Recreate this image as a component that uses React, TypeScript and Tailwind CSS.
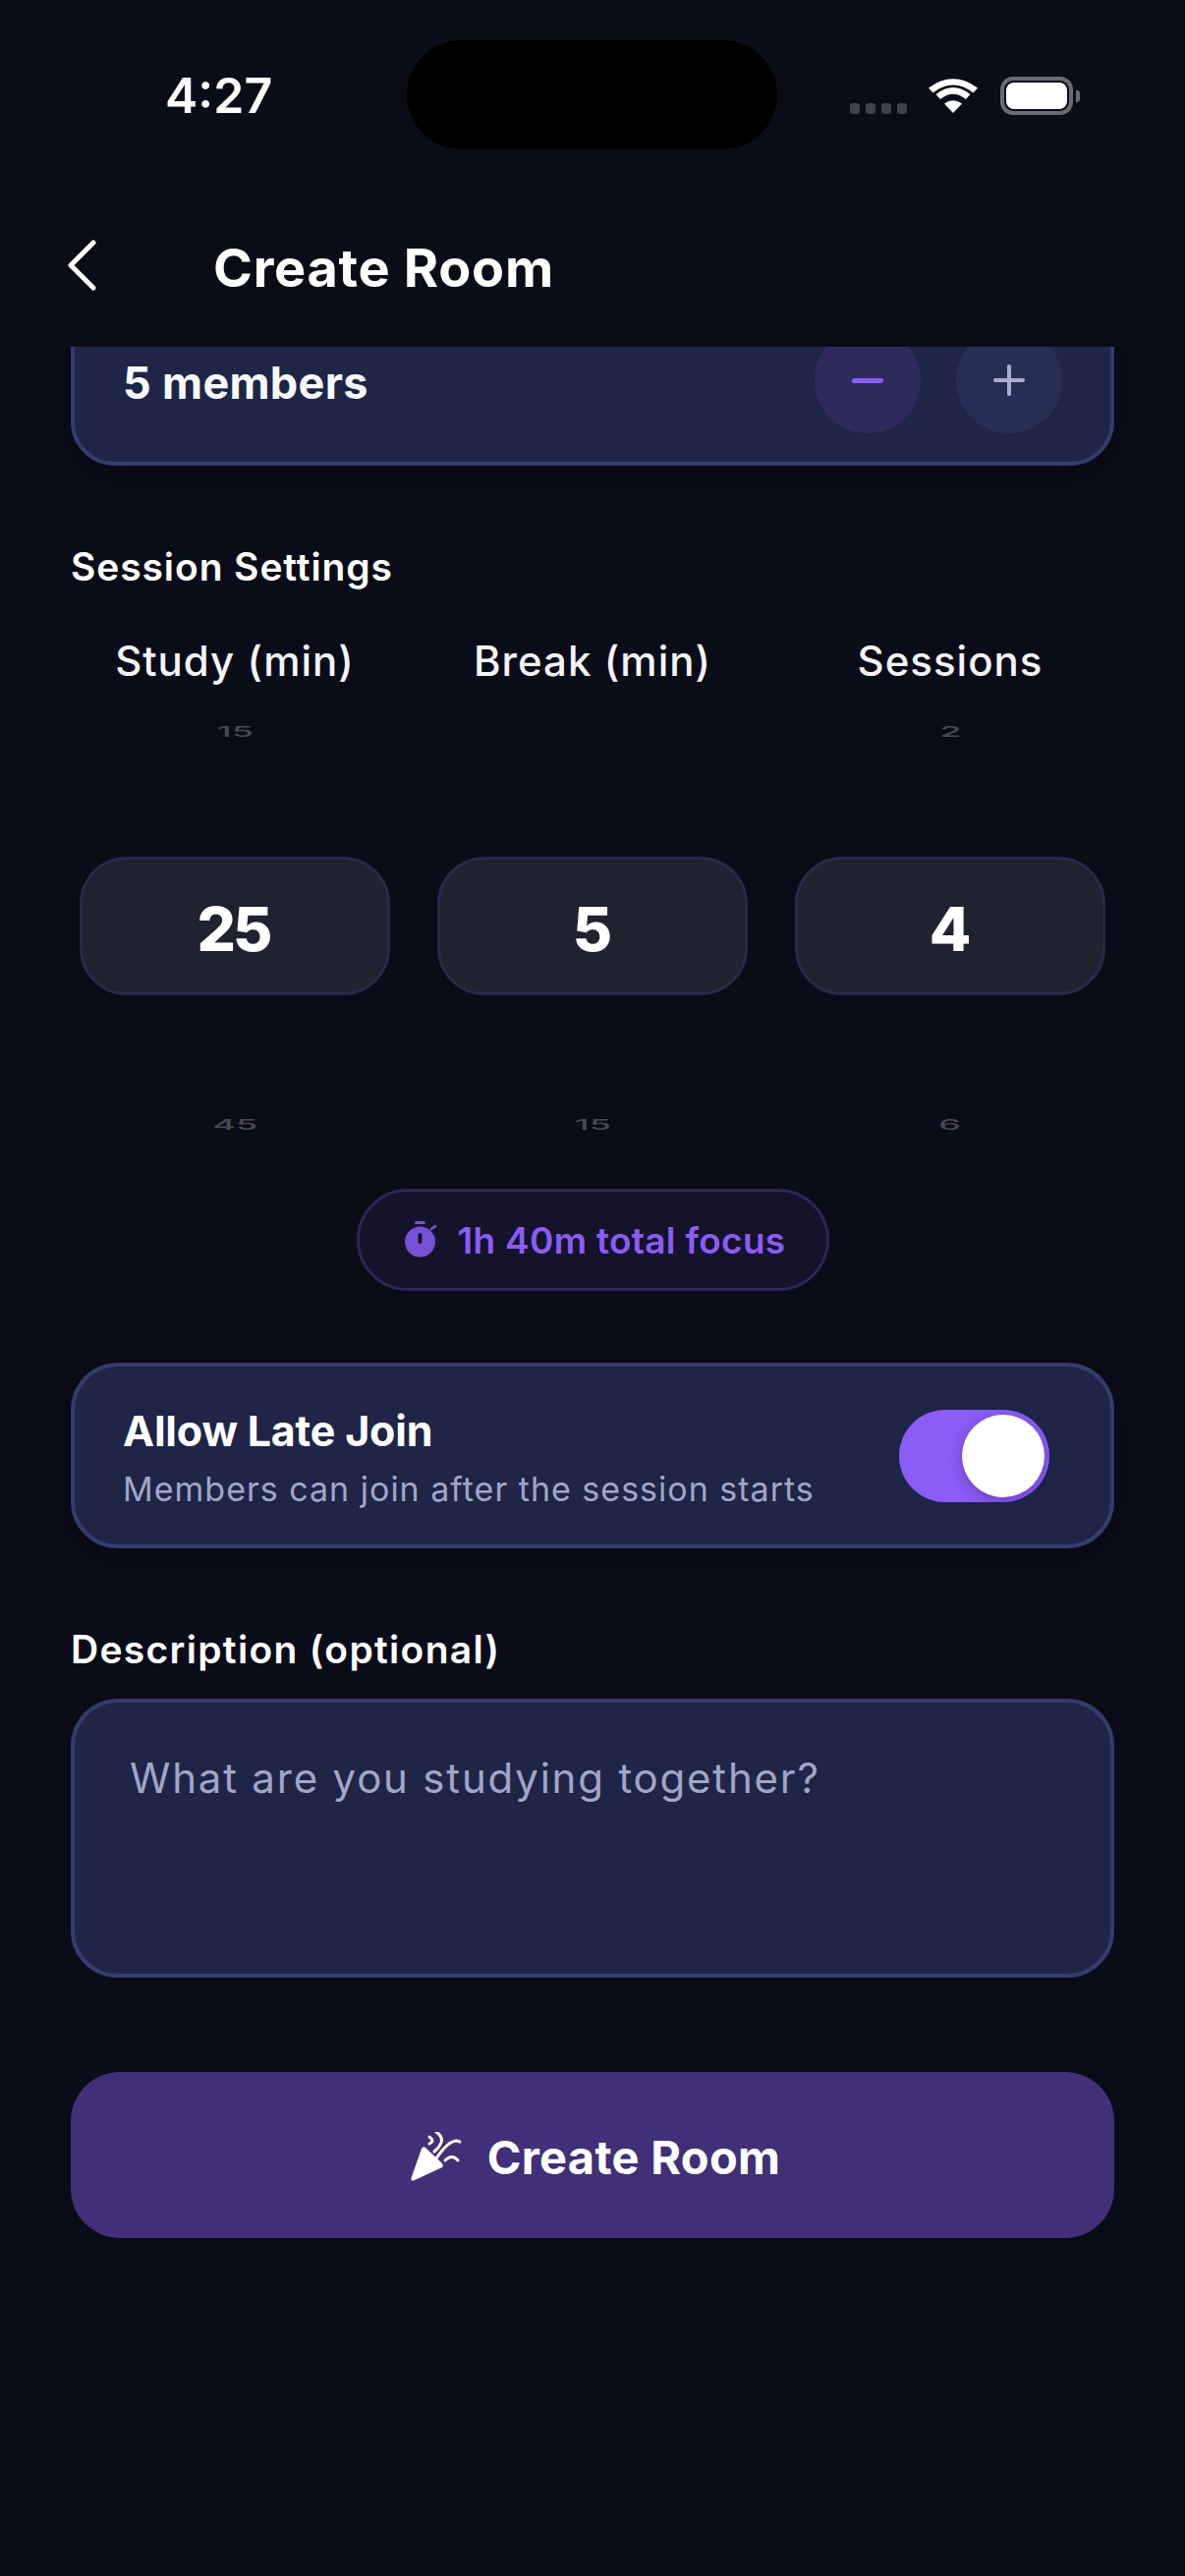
const font = { fontFamily: '"Inter", "Liberation Sans", sans-serif' };

function Wheel({ label, top, value, bottom }: { label: string; top: string; value: string; bottom: string }) {
  return (
    <div className="flex flex-col items-center w-[316px]">
      <div className="h-[50px] flex items-center text-[42px] leading-[50px] font-medium tracking-[1px] text-[#f4f4f8] whitespace-nowrap">{label}</div>
      <div className="h-[30px] mt-[32px] flex items-center text-[24px] font-medium text-[#474852] scale-y-[0.62] scale-x-[1.5]">{top}</div>
      <div className="mt-[112px] w-[316px] h-[141px] pt-[6px] pr-[3px] rounded-[48px] bg-[#20222f] border-[3px] border-[#2c2848] flex items-center justify-center text-[62px] font-extrabold tracking-[-3px] text-white">{value}</div>
      <div className="mt-[117px] h-[30px] flex items-center text-[24px] font-medium text-[#474852] scale-y-[0.62] scale-x-[1.5]">{bottom}</div>
    </div>
  );
}

export default function App() {
  return (
    <div style={font} className="w-[1206px] h-[2622px] bg-[#0a0c18] flex flex-col overflow-hidden text-white">
      <div className="relative h-[176px] shrink-0">
        <div className="absolute left-[168px] top-[66px] text-[50px] leading-[62px] font-semibold">4:27</div>
        <div className="absolute left-[414px] top-[41px] w-[377px] h-[111px] rounded-[56px] bg-black" />
        <div className="absolute left-[865px] top-[105px] flex gap-[6px]">
          <span className="w-[10px] h-[11px] rounded-[3px] bg-[#3f414c]" />
          <span className="w-[10px] h-[11px] rounded-[3px] bg-[#3f414c]" />
          <span className="w-[10px] h-[11px] rounded-[3px] bg-[#3f414c]" />
          <span className="w-[10px] h-[11px] rounded-[3px] bg-[#3f414c]" />
        </div>
        <svg className="absolute left-[945px] top-[78px]" width="50" height="38" viewBox="0 0 50 38">
          <path d="M25 37 L16 27.500 Q25 21 34 27.500 Z" fill="#fff" />
          <path d="M12 23 L7.500 18 Q25 4 42.500 18 L38 23 Q25 12.500 12 23 Z" fill="#fff" />
          <path d="M4.500 14.500 L0 9.500 Q25 -9 50 9.500 L45.500 14.500 Q25 -1.500 4.500 14.500 Z" fill="#fff" transform="translate(0,2)" />
        </svg>
        <div className="absolute left-[1018px] top-[78px] w-[74px] h-[39px] rounded-[13px] border-[4px] border-[#6a6a74] p-[2px]">
          <div className="w-full h-full rounded-[8px] bg-white" />
        </div>
        <div className="absolute left-[1095px] top-[92px] w-[4px] h-[12px] rounded-r-[3px] bg-[#6a6a74]" />
      </div>

      <div className="h-[177px] shrink-0 flex items-center pl-[66px] pt-[16px]">
        <svg width="34" height="54" viewBox="0 0 34 54" fill="none" className="mb-[6px]">
          <path d="M29 4 L6 27 L29 50" stroke="#fff" strokeWidth="5" strokeLinecap="round" strokeLinejoin="round" />
        </svg>
        <div className="ml-[117px] text-[54px] font-bold tracking-[0.7px] leading-[64px]">Create Room</div>
      </div>

      <div className="flex-1 overflow-hidden px-[72px]">
        <div className="-mt-[70px] h-[191px] rounded-[45px] bg-[#1e2547] border-[4px] border-[#333c6c] flex items-start justify-between pl-[49px] pr-[49px] pt-[46px] shadow-[0_10px_40px_rgba(0,0,0,0.25)]">
          <div className="text-[45px] font-bold leading-[70px] mt-[22px] tracking-[0.3px] text-[#f8f9fc]">5 members</div>
          <div className="flex gap-[36px]">
            <div className="w-[108px] h-[108px] rounded-full bg-[#2e2b5c] flex items-center justify-center">
              <div className="w-[32px] h-[5px] rounded-full bg-[#8b5cf6]" />
            </div>
            <div className="relative w-[108px] h-[108px] rounded-full bg-[#272e54] flex items-center justify-center">
              <div className="w-[32px] h-[4px] rounded-full bg-[#a8aecd]" />
              <div className="absolute w-[4px] h-[32px] rounded-full bg-[#a8aecd]" />
            </div>
          </div>
        </div>

        <div className="mt-[78px] h-[50px] flex items-center text-[39px] font-semibold tracking-[0.9px] leading-[50px]">Session Settings</div>

        <div className="mt-[46px] px-[9px] flex justify-between">
          <Wheel label="Study (min)" top="15" value="25" bottom="45" />
          <Wheel label="Break (min)" top="" value="5" bottom="15" />
          <Wheel label="Sessions" top="2" value="4" bottom="6" />
        </div>

        <div className="mt-[50px] flex justify-center">
          <div className="w-[481px] h-[104px] pl-[4px] rounded-full bg-[#15132a] border-[3px] border-[#2f2557] flex items-center justify-center gap-[21px]">
            <svg width="34" height="38" viewBox="0 0 34 38">
              <rect x="11" y="0" width="11" height="3" rx="1.500" fill="#7650d6" />
              <circle cx="16.500" cy="21" r="15.500" fill="#7650d6" />
              <path d="M28 8 L32 5" stroke="#7650d6" strokeWidth="2.500" strokeLinecap="round" />
              <rect x="14.500" y="12" width="4" height="11" rx="2" fill="#15132a" />
            </svg>
            <span className="text-[37px] font-semibold tracking-[0.3px] text-[#8b5cf6] leading-[48px] mt-[2px]">1h 40m total focus</span>
          </div>
        </div>

        <div className="mt-[73px] h-[189px] rounded-[48px] bg-[#1e2547] border-[4px] border-[#333c6c] flex items-center justify-between pl-[49px] pr-[62px] shadow-[0_10px_40px_rgba(0,0,0,0.25)]">
          <div className="flex flex-col pt-[3px]">
            <div className="text-[43px] font-bold leading-[56px] tracking-[-0.2px]">Allow Late Join</div>
            <div className="text-[34px] text-[#a0a6c8] leading-[44px] mt-[10px] tracking-[1px]">Members can join after the session starts</div>
          </div>
          <div className="w-[153px] h-[94px] rounded-full bg-[#8b5cf6] flex items-center justify-end pr-[5px]">
            <div className="w-[84px] h-[84px] rounded-full bg-white shadow-[0_4px_14px_rgba(40,20,90,0.35)]" />
          </div>
        </div>

        <div className="mt-[78px] h-[50px] flex items-center text-[39px] font-semibold tracking-[1.3px] leading-[50px]">Description (optional)</div>

        <div className="mt-[25px] h-[284px] rounded-[48px] bg-[#1e2547] border-[4px] border-[#333c6c] pl-[56px] pt-[49px] text-[42px] tracking-[1.8px] leading-[56px] text-[#a0a6c8]">
          What are you studying together?
        </div>

        <div className="mt-[96px] h-[169px] pl-[6px] rounded-[50px] bg-[#412f77] flex items-center justify-center gap-[26px]">
          <svg width="52" height="50" viewBox="0 0 52 50" fill="none" className="mt-[2px]">
            <path d="M0.500 47 L11 17 Q12.500 14 15 16 L32 32 Q34 35 31 36.500 L3 49.500 Q0 50 0.500 47 Z" fill="#fff" />
            <path d="M19 5 Q25 9 19 12" stroke="#fff" strokeWidth="3" strokeLinecap="round" />
            <path d="M26 0 Q33 5 31 11 Q29 16 24 20" stroke="#fff" strokeWidth="3" strokeLinecap="round" />
            <path d="M26 27 Q38 9 47 9 L50 10" stroke="#fff" strokeWidth="3" strokeLinecap="round" />
            <path d="M35 29 Q42 22 48 29" stroke="#fff" strokeWidth="3" strokeLinecap="round" />
          </svg>
          <span className="text-[47px] font-bold leading-[60px] tracking-[0.3px] mt-[4px]">Create Room</span>
        </div>
      </div>
    </div>
  );
}
